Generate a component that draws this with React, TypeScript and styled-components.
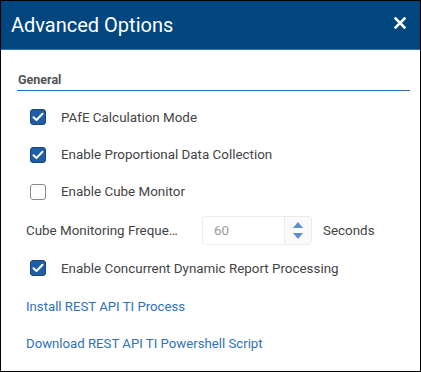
import React from "react";
import styled, { createGlobalStyle } from "styled-components";

const Global = createGlobalStyle`
  html, body { margin: 0; padding: 0; background: #fff; }
  body { font-family: Roboto, "Liberation Sans", sans-serif; }
  * { box-sizing: border-box; }
`;

const Dialog = styled.div`
  width: 421px;
  height: 372px;
  border: 1px solid #000;
  display: flex;
  flex-direction: column;
  background: #fff;
  overflow: hidden;
`;

const Header = styled.div`
  height: 49px;
  flex: none;
  background: #02467f;
  border-bottom: 1px solid #2d74bd;
  display: flex;
  align-items: center;
  justify-content: space-between;
  padding: 0 12px 1px 10px;
`;

const Title = styled.h1`
  margin: 0;
  color: #fff;
  font-size: 20px;
  font-weight: 400;
  line-height: 24px;
`;

const Close = styled.button`
  border: none;
  background: transparent;
  padding: 0;
  width: 16px;
  height: 16px;
  display: flex;
  align-items: center;
  justify-content: center;
  cursor: pointer;
  margin-top: -4px;
`;

const Body = styled.div`
  padding: 0 10px 0 16px;
  display: flex;
  flex-direction: column;
`;

const SectionTitle = styled.div`
  margin-top: 22px;
  padding: 0 0 2px 1px;
  line-height: 16px;
  font-size: 12.5px;
  font-weight: 700;
  color: #555;
  border-bottom: 1px solid #2a6fb8;
`;

const List = styled.div`
  padding-top: 7px;
  display: flex;
  flex-direction: column;
`;

const Row = styled.label<{ $h?: number }>`
  height: ${(p) => p.$h ?? 37}px;
  display: flex;
  align-items: center;
  gap: 15px;
  padding-left: 13px;
  font-size: 13.4px;
  color: #444;
`;

const Box = styled.span<{ $checked: boolean }>`
  width: 16px;
  height: 16px;
  flex: none;
  border-radius: 3px;
  border: 1px solid ${(p) => (p.$checked ? "#16477e" : "#8a8a8a")};
  background: ${(p) => (p.$checked ? "#1f5ea4" : "#fff")};
  display: flex;
  align-items: center;
  justify-content: center;
`;

const FieldRow = styled.div`
  height: 40px;
  display: flex;
  align-items: center;
  padding-left: 9px;
  font-size: 13.4px;
  color: #444;
`;

const FieldLabel = styled.span`
  width: 176px;
  flex: none;
  white-space: nowrap;
  overflow: hidden;
  text-overflow: ellipsis;
  padding-right: 24px;
`;

const Spin = styled.div`
  width: 110px;
  height: 29px;
  border: 1px solid #ececec;
  border-radius: 3px;
  display: flex;
  background: #fff;
`;

const SpinValue = styled.div`
  flex: 1;
  padding-left: 11px;
  display: flex;
  align-items: center;
  color: #9a9a9a;
  font-size: 13.4px;
`;

const SpinButtons = styled.div`
  width: 27px;
  border-left: 1px solid #ececec;
  background: #fafafa;
  display: flex;
  flex-direction: column;
  align-items: center;
  justify-content: center;
  gap: 5px;
`;

const Unit = styled.span`
  margin-left: 11px;
`;

const Link = styled.a<{ $h?: number }>`
  height: ${(p) => p.$h ?? 38}px;
  display: flex;
  align-items: center;
  padding-left: 9px;
  font-size: 13.2px;
  color: #2f72b8;
  text-decoration: none;
`;

const Check = () => (
  <svg width="12" height="10" viewBox="0 0 12 10">
    <path d="M1.5 5.2 L4.5 8 L10.5 1.8" fill="none" stroke="#fff" strokeWidth="2" strokeLinecap="round" strokeLinejoin="round" />
  </svg>
);

const CheckRow = ({ checked, label, h }: { checked: boolean; label: string; h?: number }) => (
  <Row $h={h}>
    <Box $checked={checked}>{checked && <Check />}</Box>
    <span>{label}</span>
  </Row>
);

export default function App() {
  return (
    <>
      <Global />
      <Dialog>
        <Header>
          <Title>Advanced Options</Title>
          <Close aria-label="Close">
            <svg width="12" height="12" viewBox="0 0 12 12">
              <path d="M1.5 1.5 L10.5 10.5 M10.5 1.5 L1.5 10.5" stroke="#fff" strokeWidth="2.6" strokeLinecap="square" />
            </svg>
          </Close>
        </Header>
        <Body>
          <SectionTitle>General</SectionTitle>
          <List>
            <CheckRow checked label="PAfE Calculation Mode" h={38} />
            <CheckRow checked label="Enable Proportional Data Collection" h={37} />
            <CheckRow checked={false} label="Enable Cube Monitor" h={37} />
            <FieldRow>
              <FieldLabel>Cube Monitoring Frequency</FieldLabel>
              <Spin>
                <SpinValue>60</SpinValue>
                <SpinButtons>
                  <svg width="10" height="6" viewBox="0 0 10 6">
                    <path d="M5 0 L10 6 L0 6 Z" fill="#5b90cb" />
                  </svg>
                  <svg width="10" height="6" viewBox="0 0 10 6">
                    <path d="M0 0 L10 0 L5 6 Z" fill="#5b90cb" />
                  </svg>
                </SpinButtons>
              </Spin>
              <Unit>Seconds</Unit>
            </FieldRow>
            <CheckRow checked label="Enable Concurrent Dynamic Report Processing" h={36} />
            <Link href="#" $h={40}>Install REST API TI Process</Link>
            <Link href="#" $h={34}>Download REST API TI Powershell Script</Link>
          </List>
        </Body>
      </Dialog>
    </>
  );
}
